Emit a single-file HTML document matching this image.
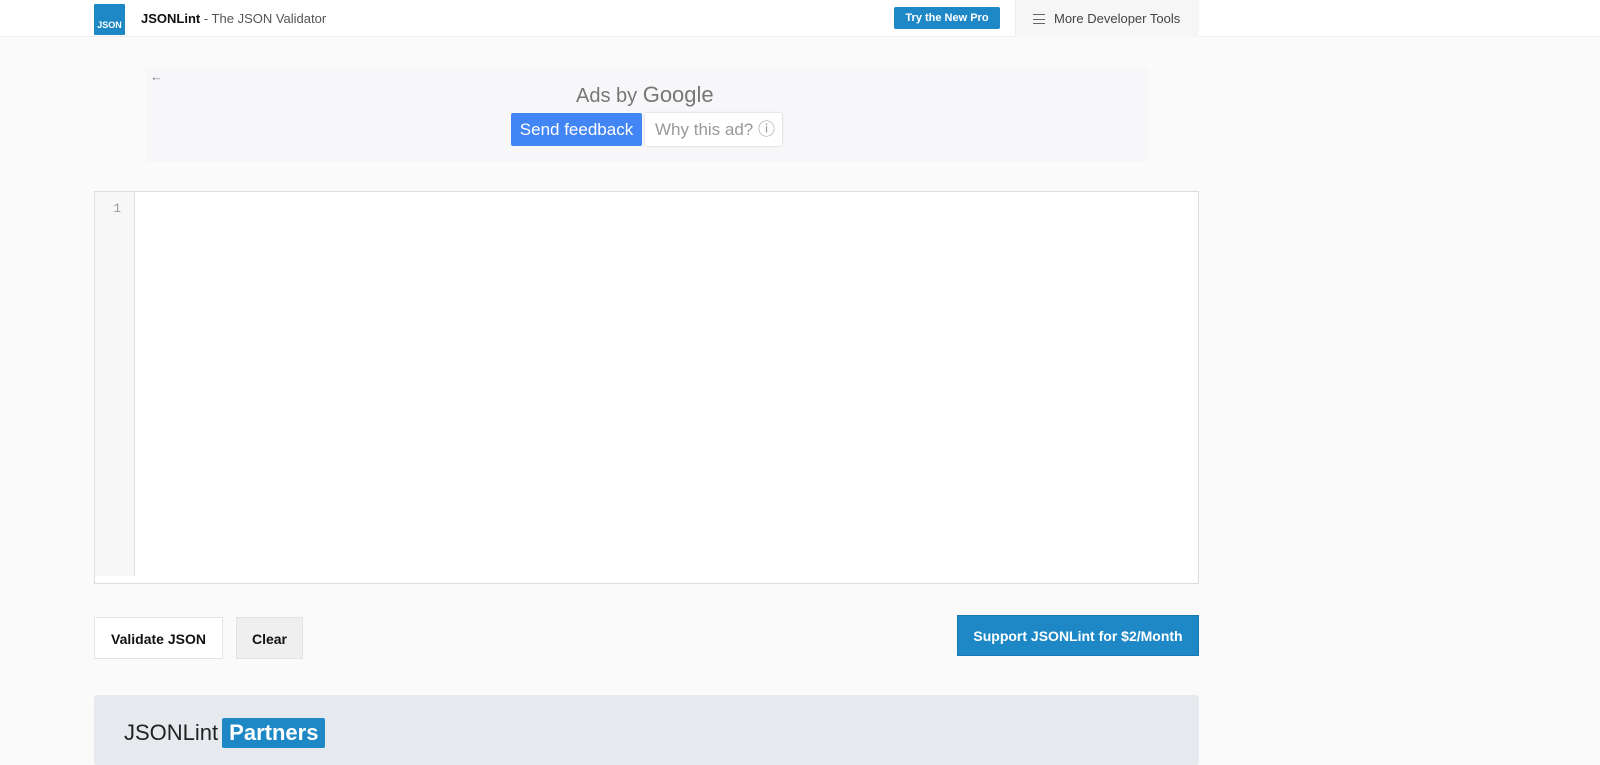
<!DOCTYPE html>
<html><head><style>
*{box-sizing:border-box;margin:0;padding:0}
body{width:1600px;height:755px;overflow:hidden;background:#fafafa;font-family:"Liberation Sans",sans-serif;position:relative}
.hdr{position:absolute;left:0;top:0;width:1600px;height:37px;background:#fff;border-bottom:1px solid #eee}
.logo{position:absolute;left:94px;top:4px;width:31px;height:31px;background:#1e88c7;color:#fff;font-size:9px;font-weight:bold;text-align:center;line-height:42px;border-radius:1px}
.title{position:absolute;left:141px;top:11px;font-size:13px;color:#555;white-space:nowrap}
.title b{color:#111}
.pro{position:absolute;left:894px;top:7px;width:106px;height:22px;background:#1e88c7;color:#fff;font-size:11px;font-weight:bold;text-align:center;line-height:22px;border-radius:2px;white-space:nowrap}
.more{position:absolute;left:1015px;top:0;width:184px;height:37px;background:#f6f6f6;font-size:13px;color:#444;line-height:37px;padding-left:38px;border-left:1px solid #eee;white-space:nowrap}
.ham{position:absolute;left:17px;top:14px;width:12px;height:10px;border-top:1px solid #666;border-bottom:1px solid #666}
.ham:after{content:"";position:absolute;left:0;top:4px;width:12px;border-top:1px solid #666}
.ad{position:absolute;left:146px;top:68px;width:1002px;height:94px;background:#f7f6f9}
.back{position:absolute;left:4px;top:1px;color:#888;font-size:13px}
.adsby{position:absolute;left:430px;top:14px;font-size:20px;color:#777;white-space:nowrap}
.adsby span{font-size:22px}
.sf{position:absolute;left:365px;top:45px;width:131px;height:33px;background:#4285f4;color:#fff;font-size:17px;line-height:33px;text-align:center;border-radius:2px;white-space:nowrap}
.why{position:absolute;left:499px;top:45px;width:137px;height:33px;background:#fff;color:#999;font-size:17px;line-height:33px;padding-left:10px;border-radius:2px;box-shadow:0 0 2px #ccc;white-space:nowrap}
.ed{position:absolute;left:94px;top:191px;width:1105px;height:393px;background:#fff;border:1px solid #ddd}
.gut{position:absolute;left:0;top:0;width:40px;height:384px;background:#f7f7f7;border-right:1px solid #ddd;font-family:"Liberation Mono",monospace;font-size:13px;color:#999;text-align:right;padding:9px 13px 0 0}
.btn{position:absolute;top:617px;height:42px;font-size:14px;font-weight:bold;color:#111;line-height:42px;text-align:center;border:1px solid #e3e3e3;white-space:nowrap}
.sup{position:absolute;left:957px;top:615px;width:242px;height:41px;background:#1e88c7;color:#fff;font-size:14px;font-weight:bold;text-align:center;line-height:41px;border:1px solid #1a78b0;white-space:nowrap}
.part{position:absolute;left:94px;top:695px;width:1105px;height:70px;background:#e6eaee;border-radius:3px}
.part .t{position:absolute;left:30px;top:23px;font-size:22px;color:#222;white-space:nowrap}
.part .p{display:inline-block;background:#1e88c7;color:#fff;font-weight:bold;padding:2px 7px;border-radius:2px;margin-left:4px}
</style></head><body>
<div class="hdr">
<div class="logo">JSON</div>
<div class="title"><b>JSONLint</b> - The JSON Validator</div>
<div class="pro">Try the New Pro</div>
<div class="more"><div class="ham"></div>More Developer Tools</div>
</div>
<div class="ad">
<div class="back">←</div>
<div class="adsby">Ads by <span>Google</span></div>
<div class="sf">Send feedback</div>
<div class="why">Why this ad? ⓘ</div>
</div>
<div class="ed"><div class="gut">1</div></div>
<div class="btn" style="left:94px;width:129px;background:#fff">Validate JSON</div>
<div class="btn" style="left:236px;width:67px;background:#efefef">Clear</div>
<div class="sup">Support JSONLint for $2/Month</div>
<div class="part"><div class="t">JSONLint<span class="p">Partners</span></div></div>
</body></html>
